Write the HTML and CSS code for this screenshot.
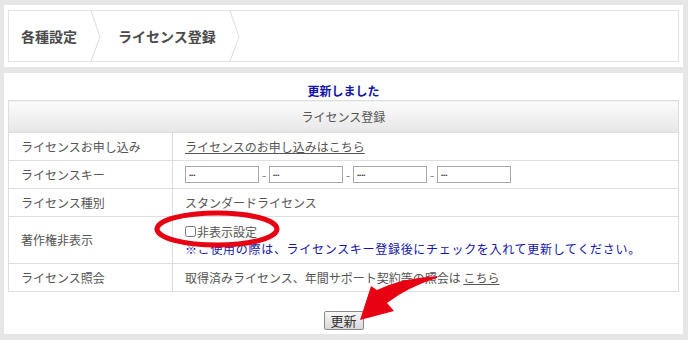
FILE: index.html
```html
<!DOCTYPE html>
<html lang="ja">
<head>
    <meta charset="UTF-8">
    <meta name="viewport" content="width=device-width, initial-scale=1.0">
    <title>ライセンス登録</title>
    <link rel="stylesheet" href="styles.css">
</head>
<body>
    <div class="page">
        <div class="panel top-panel">
            <div class="breadcrumb">
                <div class="crumb">
                    <span class="crumb-text">各種設定</span>
                    <svg class="chevron" width="12" height="50" viewBox="0 0 12 50"><polyline points="1,0 10,26 1,50" fill="none" stroke="#dcdcdc" stroke-width="1"/></svg>
                </div>
                <div class="crumb">
                    <span class="crumb-text">ライセンス登録</span>
                    <svg class="chevron" width="12" height="50" viewBox="0 0 12 50"><polyline points="1,0 10,26 1,50" fill="none" stroke="#dcdcdc" stroke-width="1"/></svg>
                </div>
            </div>
        </div>

        <div class="panel main-panel">
            <p class="notice">更新しました</p>
            <table class="form-table">
                <tr>
                    <th colspan="2">ライセンス登録</th>
                </tr>
                <tr>
                    <td class="label">ライセンスお申し込み</td>
                    <td><a href="#" class="link">ライセンスのお申し込みはこちら</a></td>
                </tr>
                <tr>
                    <td class="label">ライセンスキー</td>
                    <td>
                        <div class="key-inputs">
                            <input type="password" class="key" value="xxx">
                            <span class="dash">-</span>
                            <input type="password" class="key" value="xxx">
                            <span class="dash">-</span>
                            <input type="password" class="key" value="xxxx">
                            <span class="dash">-</span>
                            <input type="password" class="key" value="xxx">
                        </div>
                    </td>
                </tr>
                <tr>
                    <td class="label">ライセンス種別</td>
                    <td>スタンダードライセンス</td>
                </tr>
                <tr class="tall">
                    <td class="label">著作権非表示</td>
                    <td>
                        <label class="check"><input type="checkbox">非表示設定</label>
                        <div class="note">※ご使用の際は、ライセンスキー登録後にチェックを入れて更新してください。</div>
                    </td>
                </tr>
                <tr>
                    <td class="label">ライセンス照会</td>
                    <td>取得済みライセンス、年間サポート契約等の照会は <a href="#" class="link">こちら</a></td>
                </tr>
            </table>
            <div class="actions">
                <button type="button" class="submit">更新</button>
            </div>
        </div>

        <!-- annotation marks drawn over the screenshot -->
        <svg class="annotation" width="688" height="340" viewBox="0 0 688 340">
            <ellipse cx="217" cy="229" rx="60" ry="16" fill="none" stroke="#e60012" stroke-width="5"/>
            <path d="M437,276 Q402,278 377,290 L371,286 L360,320 L394,311 L387,303 Q408,287 437,278 Z" fill="#e60012"/>
        </svg>
    </div>
</body>
</html>
```

FILE: styles.css
```css
body {
    margin: 0;
    background-color: #e6e6e6;
    font-family: "Noto Sans CJK JP", sans-serif;
    font-size: 12px;
    color: #555;
}

.page {
    position: relative;
    width: 688px;
    height: 340px;
    padding: 5px 5px 0 4px;
    box-sizing: border-box;
}

.panel {
    background-color: #fff;
    padding: 5px 4px;
    box-sizing: border-box;
}

.top-panel {
    height: 62px;
}

.breadcrumb {
    display: flex;
    height: 52px;
    border: 1px solid #e2e2e2;
    box-sizing: border-box;
}

.crumb {
    display: flex;
    align-items: center;
    padding-left: 12px;
}

.crumb + .crumb {
    padding-left: 16px;
}

.crumb-text {
    font-size: 14px;
    font-weight: bold;
    color: #4a4a4a;
}

.chevron {
    display: block;
    margin-left: 13px;
}

.main-panel {
    margin-top: 6px;
    height: 261px;
    padding-top: 9px;
}

.notice {
    margin: 0;
    height: 18px;
    line-height: 18px;
    text-align: center;
    font-weight: bold;
    color: #1414a8;
}

.form-table {
    width: 100%;
    border-collapse: collapse;
}

.form-table th,
.form-table td {
    border: 1px solid #dedede;
}

.form-table th {
    height: 29px;
    font-weight: normal;
    background: linear-gradient(#fbfbfb, #e7e7e7);
    color: #555;
}

.form-table td {
    height: 27px;
    padding: 0 12px;
    line-height: 16px;
}

.form-table td.label {
    width: 139px;
}

.form-table tr.tall td {
    height: 46px;
}

.link {
    color: #555;
}

.key-inputs {
    display: flex;
    align-items: center;
}

.key {
    width: 74px;
    height: 17px;
    box-sizing: border-box;
    border: 1px solid #a8a8a8;
    padding: 0 3px;
    font-size: 6px;
    color: #333;
}

.dash {
    width: 10px;
    text-align: center;
    color: #777;
}

.check {
    display: flex;
    align-items: center;
    height: 17px;
}

.check input {
    width: 11px;
    height: 11px;
    margin: 0 1px 0 0;
}

.note {
    height: 17px;
    line-height: 17px;
    color: #1414a8;
    letter-spacing: 0.7px;
}

.actions {
    margin-top: 19px;
    text-align: center;
}

.submit {
    width: 40px;
    height: 19px;
    padding: 0;
    font-family: "Noto Sans CJK JP", sans-serif;
    font-size: 13px;
    line-height: 17px;
    color: #333;
    border: 1px solid #8a8a8a;
    border-radius: 2px;
    background: linear-gradient(#f8f8f8, #dadada);
}

.annotation {
    position: absolute;
    left: 0;
    top: 0;
    pointer-events: none;
}
```
